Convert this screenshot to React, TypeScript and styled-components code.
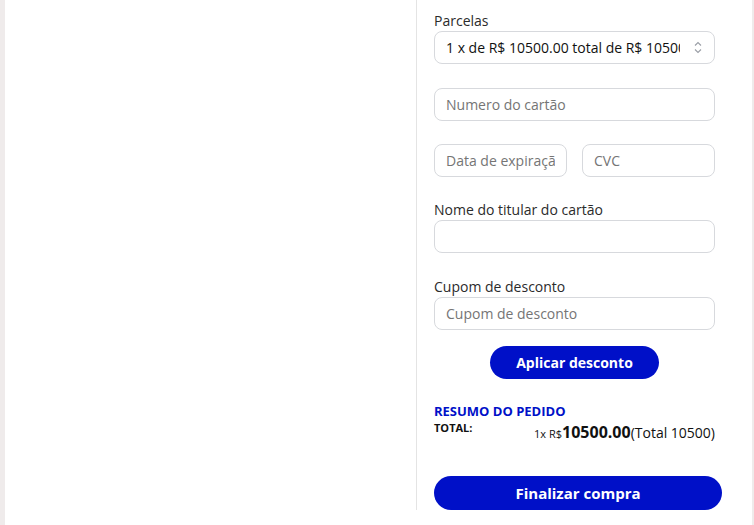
import React from 'react';
import styled, { createGlobalStyle } from 'styled-components';

const BLUE = '#0010c8';

const GlobalStyle = createGlobalStyle`
  html, body {
    margin: 0;
    padding: 0;
    background: #efebeb;
    font-family: 'Open Sans', 'Liberation Sans', sans-serif;
  }
  * { box-sizing: border-box; }
`;

const StyledPage = styled.div`
  display: flex;
  margin: 0 2px 0 5px;
  min-height: 525px;
  background: #ffffff;
`;

const StyledSide = styled.div`
  width: 412px;
  height: 510px;
  border-right: 1px solid #e4e4e4;
`;

const StyledForm = styled.div`
  display: flex;
  flex-direction: column;
  padding: 10px 0 0 17px;
  width: 320px;
`;

const StyledLabel = styled.label`
  display: block;
  font-size: 14px;
  line-height: 21px;
  color: #2b2b2b;
`;

const StyledField = styled.div<{ $top: number }>`
  margin-top: ${(p) => p.$top}px;
`;

const StyledRow = styled.div`
  display: flex;
  gap: 15px;
  width: 281px;
  margin-top: 23px;
`;

const StyledInput = styled.input<{ $w?: number }>`
  display: block;
  width: ${(p) => p.$w ?? 281}px;
  height: 33px;
  padding: 0 11px;
  border: 1px solid #d7d9dd;
  border-radius: 8px;
  font-family: inherit;
  font-size: 14px;
  color: #111;
  background: #fff;
  outline: none;

  ::placeholder {
    color: #a3a7ae;
  }
`;

const StyledSelect = styled.div`
  display: flex;
  align-items: center;
  width: 281px;
  height: 33px;
  padding: 0 12px 0 11px;
  border: 1px solid #d7d9dd;
  border-radius: 8px;
`;

const StyledSelectText = styled.span`
  flex: 1;
  font-size: 14px;
  color: #111;
  white-space: nowrap;
  overflow: hidden;
  margin-right: 14px;
`;

const StyledPill = styled.button<{ $w: number }>`
  display: block;
  width: ${(p) => p.$w}px;
  height: 34px;
  border: none;
  border-radius: 17px;
  background: ${BLUE};
  color: #fff;
  font-family: inherit;
  font-weight: 700;
  font-size: 14px;
  cursor: pointer;
`;

const StyledApply = styled(StyledPill)`
  margin: 16px 0 0 56px;
  height: 33px;
`;

const StyledFinish = styled(StyledPill)`
  margin-top: 33px;
  font-size: 15px;
`;

const StyledSummaryTitle = styled.div`
  margin-top: 23px;
  color: ${BLUE};
  font-weight: 700;
  font-size: 13px;
  line-height: 18px;
`;

const StyledTotalRow = styled.div`
  display: flex;
  justify-content: space-between;
  width: 281px;
`;

const StyledTotalLabel = styled.span`
  font-weight: 700;
  font-size: 11px;
  line-height: 16px;
  color: #111;
`;

const StyledTotalValue = styled.span`
  margin-top: 1px;
  font-size: 14px;
  color: #111;

  small {
    font-size: 11px;
  }
  strong {
    font-size: 16px;
  }
`;

const App = () => {
  return (
    <>
      <GlobalStyle />
      <StyledPage>
        <StyledSide />
        <StyledForm>
          <StyledLabel>Parcelas</StyledLabel>
          <StyledSelect>
            <StyledSelectText>1 x de R$ 10500.00 total de R$ 10500.00</StyledSelectText>
            <svg width="8" height="13" viewBox="0 0 8 13" fill="none" stroke="#9a9ea6" strokeWidth="1.1">
              <path d="M1 4.5 L4 1.5 L7 4.5" />
              <path d="M1 8.5 L4 11.5 L7 8.5" />
            </svg>
          </StyledSelect>
          <StyledField $top={24}>
            <StyledInput placeholder="Numero do cartão" />
          </StyledField>
          <StyledRow>
            <StyledInput $w={133} placeholder="Data de expiração" />
            <StyledInput $w={133} placeholder="CVC" />
          </StyledRow>
          <StyledField $top={22}>
            <StyledLabel>Nome do titular do cartão</StyledLabel>
            <StyledInput />
          </StyledField>
          <StyledField $top={23}>
            <StyledLabel>Cupom de desconto</StyledLabel>
            <StyledInput placeholder="Cupom de desconto" />
          </StyledField>
          <StyledApply $w={169}>Aplicar desconto</StyledApply>
          <StyledSummaryTitle>RESUMO DO PEDIDO</StyledSummaryTitle>
          <StyledTotalRow>
            <StyledTotalLabel>TOTAL:</StyledTotalLabel>
            <StyledTotalValue>
              <small>1x R$</small>
              <strong>10500.00</strong>(Total 10500)
            </StyledTotalValue>
          </StyledTotalRow>
          <StyledFinish $w={288}>Finalizar compra</StyledFinish>
        </StyledForm>
      </StyledPage>
    </>
  );
};

export default App;
